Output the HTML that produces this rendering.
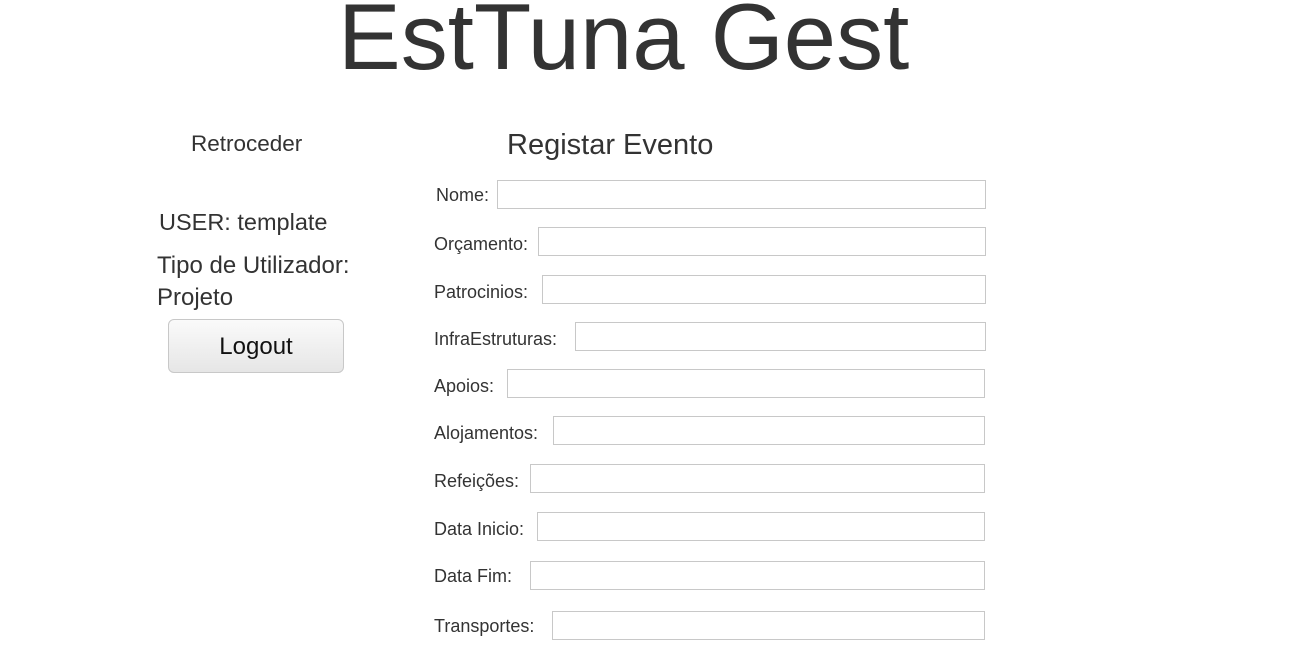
<!DOCTYPE html>
<html><head><meta charset="utf-8"><style>
body{margin:0;width:1303px;height:656px;background:#fff;font-family:"Liberation Sans",sans-serif;color:#333;position:relative;overflow:hidden}
.a{position:absolute;white-space:nowrap}
.t{font-size:94px;left:338px;top:-17px;color:#333}
.l{font-size:18px;line-height:20px}
.i{position:absolute;height:27px;border:1px solid #c8c8c8;box-sizing:border-box;background:#fff}
.btn{position:absolute;left:168px;top:319px;width:176px;height:54px;box-sizing:border-box;border:1px solid #c8c8c8;border-radius:6px;background:linear-gradient(#fafafa,#e6e6e6);font-size:24px;color:#111;text-align:center;line-height:54px}
</style></head><body>
<div class="a t">EstTuna Gest</div>
<div class="a" style="left:191px;top:131px;font-size:22.5px">Retroceder</div>
<div class="a" style="left:507px;top:129px;font-size:29px">Registar Evento</div>
<div class="a" style="left:159px;top:209px;font-size:23.5px">USER: template</div>
<div class="a" style="left:157px;top:250px;font-size:24px;line-height:32px">Tipo de Utilizador:<br>Projeto</div>
<div class="btn">Logout</div>

<div class="a l" style="left:436px;top:185px">Nome:</div><div class="i" style="left:497px;top:180px;width:489px;height:29px"></div>
<div class="a l" style="left:434px;top:234px">Orçamento:</div><div class="i" style="left:538px;top:227px;width:448px;height:29px"></div>
<div class="a l" style="left:434px;top:282px">Patrocinios:</div><div class="i" style="left:542px;top:275px;width:444px;height:29px"></div>
<div class="a l" style="left:434px;top:329px">InfraEstruturas:</div><div class="i" style="left:575px;top:322px;width:411px;height:29px"></div>
<div class="a l" style="left:434px;top:376px">Apoios:</div><div class="i" style="left:507px;top:369px;width:478px;height:29px"></div>
<div class="a l" style="left:434px;top:423px">Alojamentos:</div><div class="i" style="left:553px;top:416px;width:432px;height:29px"></div>
<div class="a l" style="left:434px;top:471px">Refeições:</div><div class="i" style="left:530px;top:464px;width:455px;height:29px"></div>
<div class="a l" style="left:434px;top:519px">Data Inicio:</div><div class="i" style="left:537px;top:512px;width:448px;height:29px"></div>
<div class="a l" style="left:434px;top:566px">Data Fim:</div><div class="i" style="left:530px;top:561px;width:455px;height:29px"></div>
<div class="a l" style="left:434px;top:616px">Transportes:</div><div class="i" style="left:552px;top:611px;width:433px;height:29px"></div>
</body></html>
